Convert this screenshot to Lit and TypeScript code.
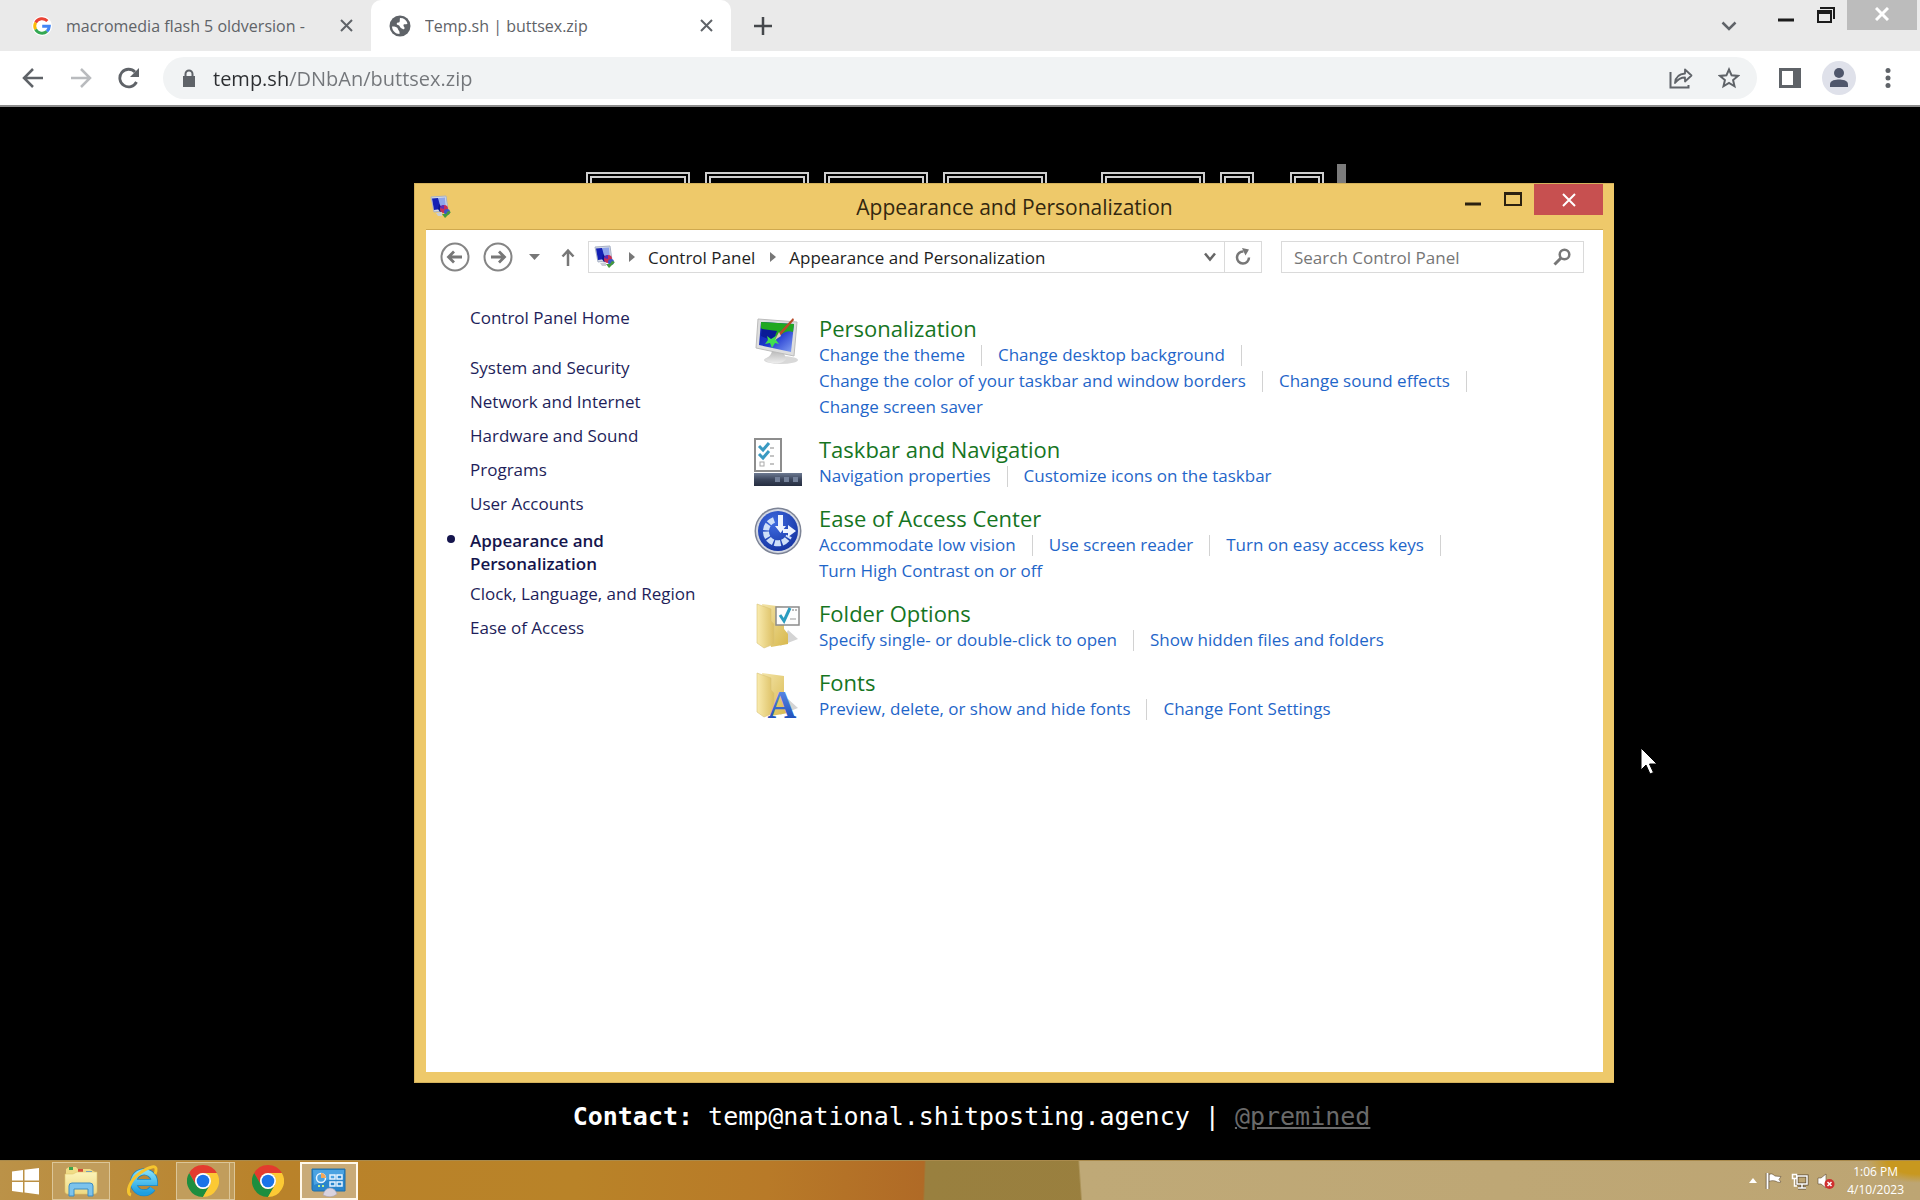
import { LitElement, html, css, svg, nothing } from "lit";
import { customElement } from "lit/decorators.js";

const icon = (w: number, h: number, body: unknown, cls = "") =>
  html`<svg class=${cls} width=${w} height=${h} viewBox="0 0 ${w} ${h}" aria-hidden="true">${body}</svg>`;

const cross = (size: number, stroke: number) =>
  icon(size, size, svg`<path d="M1 1L${size - 1} ${size - 1}M${size - 1} 1L1 ${size - 1}" fill="none" stroke="currentColor" stroke-width=${stroke} />`);

const googleIcon = icon(20, 20, svg`
  <circle cx="10" cy="10" r="10" fill="#fff" />
  <g fill="none" stroke-width="3">
    <path d="M15.400 5A7.300 7.300 0 0 0 3.600 6.600" stroke="#ea4335" />
    <path d="M3.600 6.600A7.300 7.300 0 0 0 3.600 13.400" stroke="#fbbc05" />
    <path d="M3.600 13.400A7.300 7.300 0 0 0 14.900 15.400" stroke="#34a853" />
    <path d="M14.900 15.400A7.300 7.300 0 0 0 17.300 10.300H10.200" stroke="#4285f4" />
  </g>`);

const globeIcon = icon(22, 22, svg`
  <circle cx="11" cy="11" r="10.5" fill="#5f6368" />
  <path d="M3 11.500c3 0 5.500 .5 6 2.500s2 1.500 1.500 5C6.500 19 3.200 15.800 3 11.500zM11 3c4 0 6.500 2 7.500 5.500-1.500 1.500-3.500 0-4 1.500s1.500 2 1 3.500-2 .5-3.500-.5-1-2.500-3-3-1.500-2.500 .5-2.500S10.500 5 11 3z" fill="#fff" />`);

const smallMonitor = icon(24, 24, svg`
  <path d="M2 2l15-1 2 14-14 2z" fill="#d5dbe6" stroke="#a9b2c6" />
  <path d="M3 3.500l6-.5 4 5-1 6-7 1z" fill="#1420b4" />
  <path d="M9 3l7-.5 1 11-5 .5z" fill="#8ea4ea" />
  <path d="M10 9l5 6-4 2-2-3z" fill="#0a1590" />
  <circle cx="15" cy="14" r="4" fill="#c62f55" />
  <path d="M11 13a4 4 0 0 1 4-3v4z" fill="#5b2bb8" />
  <circle cx="18" cy="17" r="3" fill="#3b56c8" />
  <path d="M13 19l3 4 6-6-3-1-2 3z" fill="#459a3c" />
  <path d="M7 18l6-1v4H9z" fill="#c9cdd6" />`);

const personalizationIcon = icon(48, 48, svg`
  <defs>
    <linearGradient id="scr" x1="0" y1="0" x2="1" y2="1"><stop offset="0" stop-color="#0719a0" /><stop offset=".5" stop-color="#2038d0" /><stop offset="1" stop-color="#86a4f4" /></linearGradient>
    <linearGradient id="base" x1="0" y1="0" x2="0" y2="1"><stop offset="0" stop-color="#b9b9b9" /><stop offset="1" stop-color="#eeeeee" /></linearGradient>
  </defs>
  <ellipse cx="27" cy="43" rx="17" ry="4" fill="#d8d8d8" />
  <path d="M18 34l12 2 2 6c-2 5-15 6-21 1 1-3 6-3 7-9z" fill="url(#base)" />
  <path d="M4 2l39 3-3 34L2 31z" fill="#dedede" stroke="#bcbcbc" />
  <path d="M7 5l33 2-3 28L5 28z" fill="url(#scr)" />
  <path d="M7 5l33 2-1 8c-8-3-11 4-17 4-4-4-9-3-15-8z" fill="#20a820" />
  <path d="M8 12l15 2-4 10-12-5z" fill="#0a1a96" />
  <path d="M13 19l4 3 8-5-3 6 3 4-4-1-3 5-2-5-5 1 3-4z" fill="#3fdf4f" />
  <path d="M39 1L24 17l-3 5 5-3L40 3z" fill="#b84a28" />
  <path d="M25 15l-4 8 6-4z" fill="#d8d0b8" />`);

const taskbarIcon = icon(48, 48, svg`
  <defs><linearGradient id="bar" x1="0" y1="0" x2="0" y2="1"><stop offset="0" stop-color="#6d7a92" /><stop offset=".5" stop-color="#3c465c" /><stop offset="1" stop-color="#252d40" /></linearGradient></defs>
  <rect x="1" y="1" width="26" height="32" fill="#fff" stroke="#8d8d8d" stroke-width="2" />
  <path d="M5 8l4 4 6-7M5 16l4 4 6-7" fill="none" stroke="#3a9ac2" stroke-width="3" />
  <rect x="6" y="24" width="4" height="4" fill="none" stroke="#aaa" />
  <path d="M16 10h4M16 18h4M16 26h4" stroke="#c4c4c4" stroke-width="2" />
  <rect y="35" width="48" height="13" fill="url(#bar)" />
  <path d="M21 39h5v5h-5zM30 39h5v5h-5zM39 39h5v5h-5z" fill="#74819a" />`);

const easeIcon = icon(48, 48, svg`
  <defs><radialGradient id="ease" cx=".4" cy=".3" r=".8"><stop offset="0" stop-color="#3f6be0" /><stop offset="1" stop-color="#12309e" /></radialGradient></defs>
  <circle cx="24" cy="24" r="23.500" fill="#7d8496" />
  <circle cx="24" cy="24" r="22" fill="#d3d8e4" />
  <circle cx="24" cy="24" r="20" fill="url(#ease)" />
  <path d="M20 13A12 12 0 1 0 35 29" fill="none" stroke="#cfdff8" stroke-width="6" stroke-dasharray="6 1.500" />
  <path d="M24 8h5v11h3l-5.500 7-5.500-7h3z" fill="#eef4ff" />
  <path d="M29 22h5v-4l8 6-8 6v-4h-5z" fill="#eef4ff" />`);

const folderBody = svg`
  <defs>
    <linearGradient id="fold" x1="0" y1="0" x2="1" y2="0"><stop offset="0" stop-color="#f9ebae" /><stop offset="1" stop-color="#dcbf62" /></linearGradient>
    <linearGradient id="foldb" x1="0" y1="0" x2="1" y2="1"><stop offset="0" stop-color="#f3e4a8" /><stop offset="1" stop-color="#d8b84c" /></linearGradient>
  </defs>
  <path d="M26 44l18-7-10-9z" fill="#d4d4d4" />
  <path d="M8 2l22 3v22l4 5v10l-17 3z" fill="url(#foldb)" />
  <path d="M3 2l14 5v12l3 3v20l-10 4-7-5z" fill="url(#fold)" stroke="#d9c377" stroke-width=".6" />`;

const folderOptionsIcon = icon(48, 48, svg`${folderBody}
  <rect x="22" y="5" width="23" height="18" fill="#fdfdfd" stroke="#8b8b8b" stroke-width="1.500" />
  <path d="M26 13l4 6 6-13" fill="none" stroke="#2a9cc0" stroke-width="3" />
  <path d="M36 17h6" stroke="#999" />
  <path d="M38 8h2M41 8h2" stroke="#777" />`);

const fontsIcon = icon(48, 48, svg`${folderBody}
  <defs><linearGradient id="ltr" x1="0" y1="0" x2="0" y2="1"><stop offset="0" stop-color="#6c9af0" /><stop offset="1" stop-color="#0f3fae" /></linearGradient></defs>
  <text x="28" y="47" text-anchor="middle" font-family="Liberation Serif, serif" font-weight="700" font-size="40" fill="url(#ltr)">A</text>`);

const chromeIcon = icon(48, 48, svg`
  <path d="M3.215 12L13.608 30A12 12 0 0 1 24 12H44.785A24 24 0 0 0 3.215 12Z" fill="#e33b2e" />
  <path d="M3.215 12A24 24 0 0 0 24 48L34.392 30A12 12 0 0 1 13.608 30Z" fill="#1e8e3e" />
  <path d="M24 12A12 12 0 0 1 34.392 30L24 48A24 24 0 0 0 44.785 12Z" fill="#fcc934" />
  <circle cx="24" cy="24" r="12" fill="#fff" />
  <circle cx="24" cy="24" r="9.500" fill="#1a73e8" />`, "app-icon");

const startIcon = icon(28, 28, svg`<path d="M1 4.500L12 3v10.500H1zM13.500 2.800L28 1v12.500H13.500zM1 15h11v10.500L1 24zM13.500 15H28v12.500l-14.500-2z" fill="#fff" />`);

const explorerIcon = icon(34, 32, svg`
  <defs><linearGradient id="exp" x1="0" y1="0" x2="0" y2="1"><stop offset="0" stop-color="#fbf3b8" /><stop offset="1" stop-color="#eed983" /></linearGradient></defs>
  <path d="M2 4l3-2h7l2 2h12l5 3v20H2z" fill="#f0dc86" />
  <path d="M5 2h4v3H5z" fill="#3fa44a" /><path d="M14 4h5v3h-5z" fill="#d24a38" /><path d="M22 6h6v2h-6z" fill="#4a90d8" />
  <path d="M1 9h8l4-2h20v19c0 2-1 3-3 3H4c-2 0-3-1-3-3z" fill="url(#exp)" stroke="#e3c76a" stroke-width=".6" />
  <path d="M5 31V21q0-3 3-3h18q3 0 3 3v10h-5v-7H10v7z" fill="#7cc3ec" stroke="#3a8cc4" />`);

const ieIcon = icon(34, 34, svg`
  <defs><linearGradient id="ie" x1="0" y1="0" x2="0" y2="1"><stop offset="0" stop-color="#7fdcf9" /><stop offset="1" stop-color="#1d9fe0" /></linearGradient></defs>
  <path d="M9 18.500H28.500A10.500 10.500 0 1 0 26.500 24.500" fill="none" stroke="#1f86c0" stroke-width="7" />
  <path d="M9 18.500H28.500A10.500 10.500 0 1 0 26.500 24.500" fill="none" stroke="url(#ie)" stroke-width="5.500" />
  <path d="M5 31C-1 29 4 16 14 9S31 1 30 6c0 1 0 2-1 4" fill="none" stroke="#f6c52e" stroke-width="3" />`);

const panelIcon = icon(36, 32, svg`
  <path d="M1 4h33v22H3q-2 0-2-2z" fill="#2a86cc" stroke="#1f6ea8" />
  <path d="M2 5h31v4L3 20z" fill="#4ba3e2" />
  <circle cx="10" cy="13" r="4.500" fill="none" stroke="#e6f4ff" stroke-width="1.500" />
  <path d="M10 8a5 5 0 0 1 5 5h-5z" fill="#f5a85a" />
  <path d="M19 10h5v4h-5zM26 10h5v4h-5zM19 17h5v4h-5zM26 17h5v4h-5z" fill="none" stroke="#e6f4ff" stroke-width="1.500" />
  <path d="M7 21h2M11 21h2" stroke="#bff08c" stroke-width="2" />
  <path d="M12 30q2-7 7-7t7 6q-6 5-14 1z" fill="#d9d3de" stroke="#a9a3b4" stroke-width=".6" />`);

interface Category { title: string; icon: unknown; links: string[] }

const categories: Category[] = [
  { title: "Personalization", icon: personalizationIcon, links: ["Change the theme", "Change desktop background", "Change the color of your taskbar and window borders", "Change sound effects", "Change screen saver"] },
  { title: "Taskbar and Navigation", icon: taskbarIcon, links: ["Navigation properties", "Customize icons on the taskbar"] },
  { title: "Ease of Access Center", icon: easeIcon, links: ["Accommodate low vision", "Use screen reader", "Turn on easy access keys", "Turn High Contrast on or off"] },
  { title: "Folder Options", icon: folderOptionsIcon, links: ["Specify single- or double-click to open", "Show hidden files and folders"] },
  { title: "Fonts", icon: fontsIcon, links: ["Preview, delete, or show and hide fonts", "Change Font Settings"] },
];

const sections = ["System and Security", "Network and Internet", "Hardware and Sound", "Programs", "User Accounts", "Appearance and Personalization", "Clock, Language, and Region", "Ease of Access"];

const base = css`
  * { box-sizing: border-box; }
  button, input { font: inherit; color: inherit; background: none; border: 0; padding: 0; margin: 0; }
  button { display: flex; align-items: center; justify-content: center; flex: none; }
  a { color: inherit; text-decoration: none; }
  svg { display: block; flex: none; }
`;

@customElement("browser-chrome")
class BrowserChrome extends LitElement {
  static styles = [base, css`
    :host { display: block; background: #fff; color: #5f6368; border-bottom: 2px solid #8c8c8c; }
    .strip { display: flex; height: 51px; background: #eaeaea; }
    .tab { display: flex; align-items: center; gap: 14px; width: 360px; padding: 0 18px; font-size: 16px; }
    .tab.active { background: #fff; border-radius: 10px 10px 0 0; }
    .tab.first { width: 371px; padding-left: 32px; }
    .label { flex: 1; overflow: hidden; white-space: nowrap; }
    .new { width: 64px; }
    .grow { flex: 1; }
    .caption { display: flex; align-items: flex-start; color: #1c1c1c; }
    .caption button { height: 30px; }
    .min { width: 38px; padding-top: 10px; }
    .max { width: 42px; }
    .close { width: 70px; background: #bcbcbc; color: #fff; padding-bottom: 2px; }
    .caption .down { width: 76px; height: 51px; color: #5f6368; }
    .end { width: 3px; }
    .bar { display: flex; align-items: center; height: 54px; padding: 0 8px 0 9px; }
    .nav { width: 48px; height: 42px; }
    .off { color: #b9bbbe; }
    .omni { flex: 1; display: flex; align-items: center; height: 42px; margin: 0 9px 0 10px; padding: 0 4px 0 20px; border-radius: 21px; background: #f1f3f4; }
    .url {
      flex: 1; min-width: 0; height: 34px; margin-left: 18px; font-size: 20px; color: #6b6e72; caret-color: #202124;
      background: linear-gradient(to right, #2c2e31 77px, #73767a 77px) text;
      -webkit-text-fill-color: transparent;
    }
    .omni button { width: 48px; height: 42px; }
    .avatar { width: 34px; height: 34px; border-radius: 50%; background: #dfe1ea; margin: 0 8px; }
  `];

  render() {
    return html`
      <div class="strip" role="tablist">
        <div class="tab first" role="tab">${googleIcon}<span class="label">macromedia flash 5 oldversion -</span><button aria-label="Close tab">${cross(13, 2)}</button></div>
        <div class="tab active" role="tab" aria-selected="true">${globeIcon}<span class="label">Temp.sh | buttsex.zip</span><button aria-label="Close tab">${cross(13, 2)}</button></div>
        <button class="new" aria-label="New tab">${icon(18, 18, svg`<path d="M9 0v18M0 9h18" stroke="#45484c" stroke-width="2.500" />`)}</button>
        <span class="grow"></span>
        <div class="caption">
          <button class="down" aria-label="Search tabs">${icon(16, 10, svg`<path d="M1.500 1.500L8 8l6.500-6.500" fill="none" stroke="currentColor" stroke-width="2.500" />`)}</button>
          <button class="min" aria-label="Minimize">${icon(16, 4, svg`<path d="M0 2h16" stroke="currentColor" stroke-width="3" />`)}</button>
          <button class="max" aria-label="Restore">${icon(18, 16, svg`<path d="M3 1h14v11" fill="none" stroke="currentColor" stroke-width="2" /><path d="M0 3h15v13H0zM2 7v7h11V7z" fill="currentColor" fill-rule="evenodd" />`)}</button>
          <button class="close" aria-label="Close">${cross(14, 3)}</button>
          <span class="end"></span>
        </div>
      </div>
      <div class="bar">
        <button class="nav" aria-label="Back">${icon(22, 22, svg`<path d="M21 11H3M11 2l-9 9 9 9" fill="none" stroke="currentColor" stroke-width="2.500" />`)}</button>
        <button class="nav off" aria-label="Forward">${icon(22, 22, svg`<path d="M1 11h18M11 2l9 9-9 9" fill="none" stroke="currentColor" stroke-width="2.500" />`)}</button>
        <button class="nav" aria-label="Reload">${icon(22, 22, svg`<path d="M18.500 15A8.800 8.800 0 1 1 17 5" fill="none" stroke="currentColor" stroke-width="2.800" /><path d="M21 1v9h-9z" fill="currentColor" />`)}</button>
        <div class="omni">
          ${icon(12, 18, svg`<path d="M0 7h12v11H0z" fill="#5f6368" /><path d="M2.500 8V5a3.500 3.500 0 0 1 7 0v3" fill="none" stroke="#5f6368" stroke-width="2" />`)}
          <input class="url" type="text" aria-label="Address" .value=${"temp.sh/DNbAn/buttsex.zip"} />
          <button aria-label="Share this page">${icon(24, 22, svg`<path d="M1.500 5v15.500h18V18" fill="none" stroke="currentColor" stroke-width="2" /><path d="M6 16c.5-6 4-9 10-9.500V2.500l6.500 6-6.500 6v-4c-4 0-7 1.500-10 5.500z" fill="none" stroke="currentColor" stroke-width="1.800" stroke-linejoin="round" />`)}</button>
          <button aria-label="Bookmark this tab">${icon(22, 22, svg`<path d="M11 2.500l2.600 5.800 6.300 .6-4.800 4.200 1.400 6.200-5.500-3.300-5.500 3.300 1.400-6.200L2.100 8.900l6.300-.6z" fill="none" stroke="currentColor" stroke-width="2" />`)}</button>
        </div>
        <button class="nav" aria-label="Side panel">${icon(22, 20, svg`<path d="M0 0h22v20H0zM3 3v14h11V3z" fill="currentColor" fill-rule="evenodd" />`)}</button>
        <button class="avatar" aria-label="Profile">${icon(20, 20, svg`<circle cx="10" cy="5" r="5" fill="#4f566b" /><path d="M1 19v-2.500C1 12 7 11.500 10 11.500s9 .5 9 5V19z" fill="#4f566b" />`)}</button>
        <button class="nav" aria-label="Menu">${icon(6, 20, svg`<circle cx="3" cy="2.500" r="2.500" fill="currentColor" /><circle cx="3" cy="10" r="2.500" fill="currentColor" /><circle cx="3" cy="17.500" r="2.500" fill="currentColor" />`)}</button>
      </div>`;
  }
}

@customElement("control-panel")
class ControlPanel extends LitElement {
  static styles = [base, css`
    :host { display: flex; flex-direction: column; background: #eec96a; border: 1px solid #d4b25c; border-right-width: 0; padding: 0 11px 10px; font-size: 17px; }
    .title { display: grid; grid-template-columns: 1fr auto 1fr; height: 45px; }
    .title svg { color: #2b2110; }
    .left { padding: 11px 0 0 3px; }
    h1 { margin: 8px 0 0; font-size: 21px; line-height: 30px; font-weight: 400; color: #33270f; }
    .caption { display: flex; justify-content: flex-end; align-items: flex-start; }
    .caption button { height: 31px; }
    .min { width: 38px; padding-top: 8px; }
    .max { width: 42px; padding-bottom: 1px; }
    .close { width: 69px; background: #c75050; }
    .title .close svg { color: #fff; }
    .client { flex: 1; background: #fff; border-top: 1px solid #cfa94f; min-height: 0; }
    .nav { display: flex; align-items: center; padding: 11px 19px 0 14px; height: 43px; color: #777; }
    .nav > button { height: 32px; }
    .round { width: 30px; margin-right: 13px; }
    .recent { width: 24px; margin-left: -4px; }
    .up { width: 20px; margin: 0 10px 0 12px; }
    .path { flex: 1; display: flex; align-items: center; height: 32px; border: 1px solid #dadada; padding-left: 4px; color: #1e1e1e; }
    .crumb { padding: 0 13px; }
    .arrow { margin-left: 12px; }
    .crumb + .arrow { margin-left: 2px; }
    .grow { flex: 1; }
    .chev { width: 28px; }
    .refresh { width: 37px; height: 30px; border-left: 1px solid #dadada; }
    .search { display: flex; align-items: center; width: 303px; height: 32px; border: 1px solid #dadada; margin-left: 19px; padding: 0 12px; }
    .search input { flex: 1; min-width: 0; height: 28px; }
    .search input::placeholder { color: #767676; opacity: 1; }
    .body { display: grid; grid-template-columns: 328px 1fr; }
    .side { padding: 34px 20px 0 44px; color: #1e1e5a; line-height: 22px; }
    .side a { display: block; }
    .side ul { list-style: none; margin: 28px 0 0; padding: 0; display: flex; flex-direction: column; gap: 12px; }
    .side .current { display: list-item; list-style: disc; max-width: 200px; line-height: 23px; font-weight: 600; color: #15154d; margin-bottom: -4px; }
    .side .current::marker { font-size: 22px; }
    .list { display: flex; flex-direction: column; gap: 15px; padding: 41px 0 0; }
    .cat { display: grid; grid-template-columns: 48px 1fr; gap: 17px; }
    .cat h2 { margin: 0; font-size: 22px; line-height: 28px; font-weight: 400; color: #16751f; }
    .cat ul { list-style: none; margin: 0; padding: 0; display: flex; flex-wrap: wrap; line-height: 26px; color: #1f66c9; }
    .cat li { display: flex; align-items: center; margin-right: 16px; white-space: nowrap; }
    .cat li:not(:last-child)::after { content: ""; width: 1px; height: 21px; margin-left: 16px; background: #d2d2d2; }
    .pic { margin-top: 3px; height: 40px; }
  `];

  render() {
    const crumbArrow = icon(6, 10, svg`<path d="M0 0l6 5-6 5z" fill="#777" />`, "arrow");
    return html`
      <header class="title">
        <div class="left">${smallMonitor}</div>
        <h1>Appearance and Personalization</h1>
        <div class="caption">
          <button class="min" aria-label="Minimize">${icon(16, 4, svg`<path d="M0 2h16" stroke="currentColor" stroke-width="3" />`)}</button>
          <button class="max" aria-label="Maximize">${icon(18, 14, svg`<path d="M0 0h18v14H0zM2 3v9h14V3z" fill="currentColor" fill-rule="evenodd" />`)}</button>
          <button class="close" aria-label="Close">${cross(14, 2)}</button>
        </div>
      </header>
      <div class="client">
        <div class="nav">
          <button class="round" aria-label="Back">${icon(30, 30, svg`<circle cx="15" cy="15" r="13.500" fill="none" stroke="#858585" stroke-width="2" /><path d="M22 15H9M14 9.500L8.500 15l5.500 5.500" fill="none" stroke="#777" stroke-width="2.800" />`)}</button>
          <button class="round" aria-label="Forward">${icon(30, 30, svg`<circle cx="15" cy="15" r="13.500" fill="none" stroke="#858585" stroke-width="2" /><path d="M8 15h13M16 9.500l5.500 5.500-5.500 5.500" fill="none" stroke="#777" stroke-width="2.800" />`)}</button>
          <button class="recent" aria-label="Recent locations">${icon(11, 6, svg`<path d="M0 0h11L5.500 6z" fill="#777" />`)}</button>
          <button class="up" aria-label="Up">${icon(16, 18, svg`<path d="M8 18V3M2.500 8.500L8 2.500l5.500 6" fill="none" stroke="#777" stroke-width="2.500" />`)}</button>
          <div class="path">
            ${smallMonitor}${crumbArrow}
            <a class="crumb" href="#">Control Panel</a>${crumbArrow}
            <a class="crumb" href="#">Appearance and Personalization</a>
            <span class="grow"></span>
            <button class="chev" aria-label="Previous locations">${icon(12, 10, svg`<path d="M1 1.500l5 6 5-6" fill="none" stroke="#666" stroke-width="2.500" />`)}</button>
            <button class="refresh" aria-label="Refresh">${icon(18, 18, svg`<path d="M9.500 3.500A6 6 0 1 0 15 9.500" fill="none" stroke="#777" stroke-width="2.500" /><path d="M8 0l7 1.500-3.500 6z" fill="#777" />`)}</button>
          </div>
          <label class="search">
            <input type="search" placeholder="Search Control Panel" aria-label="Search Control Panel" />
            ${icon(18, 18, svg`<circle cx="11.500" cy="6.500" r="4.800" fill="none" stroke="#777" stroke-width="2.500" /><path d="M8 10l-6.500 6.500" stroke="#777" stroke-width="3" />`)}
          </label>
        </div>
        <div class="body">
          <nav class="side">
            <a href="#">Control Panel Home</a>
            <ul>
              ${sections.map((s) => html`<li class=${s === "Appearance and Personalization" ? "current" : nothing}><a href="#">${s}</a></li>`)}
            </ul>
          </nav>
          <main class="list">
            ${categories.map((c) => html`
              <section class="cat">
                <div class="pic">${c.icon}</div>
                <div>
                  <h2><a href="#">${c.title}</a></h2>
                  <ul>${c.links.map((l) => html`<li><a href="#">${l}</a></li>`)}</ul>
                </div>
              </section>`)}
          </main>
        </div>
      </div>`;
  }
}

@customElement("task-bar")
class TaskBar extends LitElement {
  static styles = [base, css`
    :host {
      display: flex; height: 40px; color: #fff; border-top: 1px solid #a98a4c;
      background:
        radial-gradient(ellipse 54px 22px at 100% 0, #c8981f 60%, transparent 100%),
        linear-gradient(86deg, transparent 56.2%, #bfa977 56.3%, #bda573 100%),
        linear-gradient(92deg, #bb9248 0, #b9822a 14%, #b98328 30%, #b87a28 40%, #b06a26 48.1%, #99803f 48.2%, #9a7f3e 60%);
    }
    .apps { display: flex; padding-top: 1px; }
    .app { height: 38px; width: 58px; border: 1px solid transparent; }
    .start { width: 52px; height: 38px; padding-right: 2px; }
    .open { background: #c19d5c; border-color: #dcc698; }
    .active { background: #c9ab78; border: 2px solid #fff8ea; }
    .ie { width: 66px; }
    .group { display: flex; margin-right: 3px; }
    .group .app { width: 54px; }
    .stack { width: 5px; border: 1px solid #dcc698; border-left: 0; background: #c19d5c; }
    .app-icon { width: 32px; height: 32px; }
    .single { width: 62px; padding-right: 2px; }
    .grow { flex: 1; }
    .tray { display: flex; align-items: center; padding: 0 16px 0 0; gap: 8px; }
    .clock { font-size: 12px; line-height: 18px; text-align: center; margin-left: 4px; }
    .clock div { white-space: nowrap; }
  `];

  render() {
    return html`
      <div class="apps">
        <button class="start" aria-label="Start">${startIcon}</button>
        <button class="app open" aria-label="File Explorer">${explorerIcon}</button>
        <button class="app ie" aria-label="Internet Explorer">${ieIcon}</button>
        <div class="group"><button class="app open" aria-label="Google Chrome">${chromeIcon}</button><span class="stack"></span></div>
        <button class="app single" aria-label="Chrome">${chromeIcon}</button>
        <button class="app active" aria-label="Control Panel">${panelIcon}</button>
      </div>
      <span class="grow"></span>
      <div class="tray">
        <button aria-label="Show hidden icons">${icon(8, 5, svg`<path d="M0 5l4-5 4 5z" fill="#fff" />`)}</button>
        <button aria-label="Action Center">${icon(18, 18, svg`<path d="M2.500 1v16M4 2.500c3-1.500 4 0 6 1.500l6 .5-2 3 2 2.500c-3 1-4-.5-6-1s-4-.5-6 .5z" fill="#fff" stroke="#5e4c34" stroke-width=".6" /><path d="M2.500 1v16" stroke="#5e4c34" stroke-width="3.500" /><path d="M2.500 1v16" stroke="#fff" stroke-width="2" />`)}</button>
        <button aria-label="Network">${icon(18, 18, svg`<g fill="none" stroke="#5e4c34" stroke-width="3"><path d="M6 4h10v8H6zM11 12v4M7 16h8" /></g><g fill="none" stroke="#fff" stroke-width="1.500"><path d="M6 4h10v8H6zM11 12v4M7 16h8M1.500 2.500h4v4h-4zM3.500 7v7H6" /></g>`)}</button>
        <button aria-label="Volume muted">${icon(18, 18, svg`<path d="M1 6h3l5-4v14l-5-4H1z" fill="#fff" stroke="#5e4c34" stroke-width=".6" /><circle cx="12.500" cy="12" r="5" fill="#cf2f2f" /><path d="M10.500 10l4 4M14.500 10l-4 4" stroke="#fff" stroke-width="1.500" />`)}</button>
        <div class="clock"><div>1:06 PM</div><div>4/10/2023</div></div>
      </div>`;
  }
}

@customElement("app-root")
class AppRoot extends LitElement {
  static styles = [base, css`
    :host {
      display: flex; flex-direction: column; position: relative; min-height: 100vh; overflow: hidden;
      background: #000; font-family: "Open Sans", "Noto Sans", sans-serif;
    }
    .page { flex: 1; display: flex; flex-direction: column; justify-content: space-between; align-items: center; padding: 57px 0 26px 11px; }
    .banner { display: flex; align-items: flex-end; height: 60px; }
    .glyph { width: 104px; height: 52px; margin-right: 15px; border: 6px double #cfcfcf; }
    .glyph.wide { margin-right: 54px; }
    .glyph.small { width: 34px; }
    .glyph.mid { margin-right: 36px; }
    .glyph.last { margin-right: 13px; }
    .caret { width: 9px; height: 60px; background: #7c7c7c; }
    .contact { margin: 0; padding-left: 12px; color: #fff; font-family: "DejaVu Sans Mono", monospace; font-size: 25px; line-height: 34px; white-space: nowrap; }
    .contact a { color: #6a6a6a; text-decoration: underline; }
    .window { position: absolute; left: 414px; right: 306px; top: 183px; bottom: 117px; }
    .pointer { position: absolute; left: 1640px; top: 747px; }
  `];

  render() {
    return html`
      <browser-chrome></browser-chrome>
      <div class="page">
        <div class="banner">
          <span class="glyph"></span><span class="glyph"></span><span class="glyph"></span><span class="glyph wide"></span>
          <span class="glyph"></span><span class="glyph small mid"></span><span class="glyph small last"></span><span class="caret"></span>
        </div>
        <p class="contact"><strong>Contact:</strong> temp@national.shitposting.agency | <a href="#">@premined</a></p>
      </div>
      <task-bar></task-bar>
      <control-panel class="window"></control-panel>
      ${icon(18, 28, svg`<path d="M1 1v22l5-5 4 9 3.500-1.500-4-8.500H17z" fill="#fff" stroke="#000" />`, "pointer")}`;
  }
}
